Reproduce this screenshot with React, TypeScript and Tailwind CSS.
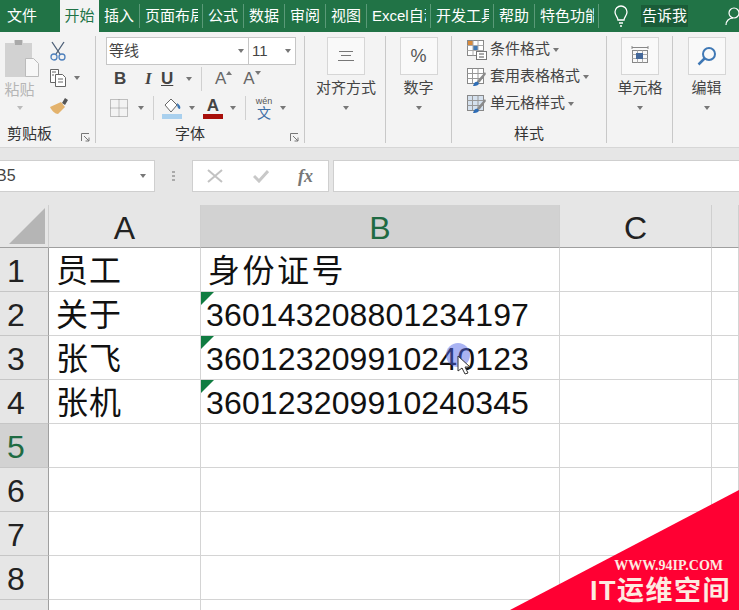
import type { ReactNode } from "react";

const cjk = "font-['Liberation_Sans','Noto_Sans_CJK_SC',sans-serif]";

const tabs = [
  { label: "插入", width: "w-[41px]" },
  { label: "页面布局", width: "w-[63px]" },
  { label: "公式", width: "w-[41px]" },
  { label: "数据", width: "w-[41px]" },
  { label: "审阅", width: "w-[41px]" },
  { label: "视图", width: "w-[41px]" },
  { label: "Excel自动", width: "w-[64px]" },
  { label: "开发工具", width: "w-[63px]" },
  { label: "帮助", width: "w-[41px]" },
  { label: "特色功能", width: "w-[64px]" },
];

function Caret({ className = "" }: { className?: string }) {
  return <span className={`inline-block h-0 w-0 border-x-[3.5px] border-t-[4px] border-x-transparent border-t-[#777] ${className}`} />;
}

function TabBar() {
  return (
    <div className="flex h-[32px] items-center overflow-hidden bg-[#217346] text-[15px] text-white">
      <div className="flex h-full w-[60px] shrink-0 items-center pl-[7px]">文件</div>
      <div className="flex h-full w-[39px] shrink-0 items-center justify-center bg-[#f3f3f3] text-[#217346]">开始</div>
      {tabs.map((t) => (
        <div key={t.label} className={`flex h-[24px] shrink-0 items-center overflow-hidden whitespace-nowrap border-r border-[#5a9a78] pl-[5px] pr-[4px] ${t.width}`}>
          <span className="block w-[100%] overflow-hidden">{t.label}</span>
        </div>
      ))}
      <svg width="18" height="24" viewBox="0 0 18 24" fill="none" stroke="#fff" strokeWidth="1.3" className="ml-[13px] shrink-0">
        <path d="M6 16c0-3-3-4-3-8a6 6 0 0 1 12 0c0 4-3 5-3 8z" />
        <path d="M7 19h4M8 22h2" />
      </svg>
      <div className="ml-[11px] shrink-0 whitespace-nowrap bg-[#1a5c38] px-[1px]">告诉我</div>
      <svg width="16" height="20" viewBox="0 0 16 20" fill="none" stroke="#fff" strokeWidth="1.2" className="ml-[37px] shrink-0">
        <circle cx="9" cy="7" r="5" />
        <path d="M1 19c0-4 3-7 7-7" />
      </svg>
    </div>
  );
}

function Group({ width, label, labelPad = "", launcher, children }: { width: string; label?: string; labelPad?: string; launcher?: boolean; children: ReactNode }) {
  return (
    <div className={`flex h-[107px] shrink-0 flex-col border-r border-[#c8c8c8] ${width}`}>
      <div className="h-[90px]">{children}</div>
      <div className={`relative flex h-[17px] items-center justify-center text-[15px] text-[#333] ${labelPad}`}>
        {label}
        {launcher && (
          <svg width="9" height="9" viewBox="0 0 9 9" fill="none" stroke="#777" className="absolute bottom-[1px] right-[5px]">
            <path d="M0.5 8V0.5H8M3 3l5 5M8 4.5V8H4.5" />
          </svg>
        )}
      </div>
    </div>
  );
}

function BigButton({ label, children }: { label: string; children: ReactNode }) {
  return (
    <div className="flex flex-col items-center text-[15px] text-[#444]">
      <div className="flex h-[38px] w-[38px] items-center justify-center border border-[#d6d6d6] bg-[#f9f9f9]">{children}</div>
      <div className="mt-[2px] whitespace-nowrap leading-[22px]">{label}</div>
      <Caret className="mt-[7px]" />
    </div>
  );
}

function StyleRow({ label, icon }: { label: string; icon: ReactNode }) {
  return (
    <div className="flex h-[27px] items-center whitespace-nowrap text-[15px] text-[#444]">
      {icon}
      <span className="ml-[3px]">{label}</span>
      <Caret className="ml-[3px] border-x-[3px] border-t-[3px]" />
    </div>
  );
}

function GridIcon({ tint }: { tint: string }) {
  return (
    <svg width="20" height="20" viewBox="0 0 20 20" className="shrink-0">
      <rect x="0.5" y="1.5" width="16" height="15" fill={tint} stroke="#888" />
      <path d="M0.5 6.5h16M0.5 11.5h16M5.5 1.5v15M11 1.5v15" stroke="#999" fill="none" />
      <path d="M18 5l-7 8-3 5 5-3 6-8z" fill="#8a8a8a" />
      <path d="M6 19c1-4 3-5 5-4l1 2c-2 2-4 2-6 2z" fill="#2f6db5" />
    </svg>
  );
}

function Ribbon() {
  return (
    <div className="flex h-[116px] border-b border-[#d6d6d6] bg-[#f3f3f3] pt-[4px]">
      <Group width="w-[96px]" label="剪贴板" labelPad="pr-[36px]" launcher>
        <div className="flex pl-[4px] pt-[2px]">
          <div className="flex w-[36px] flex-col items-center text-[15px] text-[#b5b5b5]">
            <svg width="36" height="40" viewBox="0 0 36 40">
              <path d="M1 5h9V2h9v3h9v34H1z" fill="#d2d2d2" />
              <rect x="11" y="2" width="7" height="5" fill="#a9a9a9" />
              <path d="M21.5 20.5h8l5 5v13h-13z" fill="#f7f7f7" stroke="#bbb" />
            </svg>
            <div className="-ml-[5px] mt-[1px] leading-[22px]">粘贴</div>
            <Caret className="-ml-[5px] mt-[5px] border-t-[#bbb]" />
          </div>
          <div className="ml-[9px] flex flex-col pt-[3px]">
            <svg width="18" height="20" viewBox="0 0 18 20" fill="none" stroke="#4a5d75" strokeWidth="1.3">
              <path d="M3 1l8 12M15 1L7 13" />
              <circle cx="5" cy="16" r="3" stroke="#4f81bd" />
              <circle cx="13" cy="16" r="3" stroke="#4f81bd" />
            </svg>
            <div className="mt-[7px] flex items-center">
              <svg width="18" height="20" viewBox="0 0 18 20" fill="#fff" stroke="#666">
                <path d="M1.5 1.5h8v13h-8z" />
                <path d="M6.5 6.5h7l3 3v9h-10z" />
                <path d="M3 4h4M3 7h2M9 11h5M9 14h5" />
              </svg>
              <Caret className="ml-[7px]" />
            </div>
            <svg width="20" height="18" viewBox="0 0 20 18" className="mt-[9px]">
              <path d="M13 6l3-5 3 2-3 5z" fill="#555" />
              <path d="M1 10l11-5 4 5-7 7c-3 0-6-3-8-7z" fill="#e3b26c" />
            </svg>
          </div>
        </div>
      </Group>

      <Group width="w-[209px]" label="字体" labelPad="pr-[20px]" launcher>
        <div className="pl-[10px] pt-[1px]">
          <div className="flex h-[28px] text-[15px] text-[#444]">
            <div className="flex w-[143px] items-center justify-between border border-[#c6c6c6] bg-white pl-[2px] pr-[4px]">
              等线
              <Caret />
            </div>
            <div className="flex w-[47px] items-center justify-between border border-l-0 border-[#c6c6c6] bg-white pl-[3px] pr-[4px]">
              11
              <Caret />
            </div>
          </div>
          <div className="flex h-[28px] items-center text-[17px] text-[#444]">
            <span className="ml-[8px] w-[20px] font-['Liberation_Sans'] font-bold">B</span>
            <span className="ml-[11px] w-[20px] font-['Liberation_Serif'] font-bold italic">I</span>
            <span className="-ml-[4px] w-[14px] font-['Liberation_Sans'] font-bold underline">U</span>
            <Caret className="ml-[11px]" />
            <span className="ml-[9px] h-[24px] border-l border-[#d0d0d0]" />
            <span className="ml-[13px] font-['Liberation_Sans'] text-[#666]">A</span>
            <Caret className="mb-[12px] rotate-180 border-x-[2.5px] border-t-[3px]" />
            <span className="ml-[11px] font-['Liberation_Sans'] text-[#666]">A</span>
            <Caret className="mb-[12px] border-x-[3px] border-t-[3px] border-t-[#4a6d9c]" />
          </div>
          <div className="flex h-[28px] items-center pt-[2px]">
            <svg width="18" height="18" viewBox="0 0 18 18" fill="none" stroke="#888" strokeDasharray="1 1" className="ml-[4px]">
              <rect x="0.5" y="0.5" width="17" height="17" />
              <path d="M0.5 9h17M9 0.5v17" />
            </svg>
            <Caret className="ml-[10px]" />
            <span className="ml-[9px] h-[24px] border-l border-[#d0d0d0]" />
            <div className="ml-[8px] flex w-[20px] flex-col items-center">
              <svg width="20" height="17" viewBox="0 0 20 17">
                <path d="M3 8l6-6 6 6-6 7z" fill="#fff" stroke="#666" />
                <path d="M15 6c3 2 4 4 3 6-2 0-3-2-3-6z" fill="#3f78b5" />
              </svg>
              <div className="h-[5px] w-[20px] bg-[#a9d0ee]" />
            </div>
            <Caret className="ml-[7px]" />
            <div className="ml-[8px] flex w-[20px] flex-col items-center font-['Liberation_Sans'] text-[17px] font-bold leading-[17px] text-[#444]">
              A
              <div className="h-[5px] w-[20px] bg-[#a80f0a]" />
            </div>
            <Caret className="ml-[7px]" />
            <span className="ml-[9px] h-[24px] border-l border-[#d0d0d0]" />
            <div className="ml-[9px] flex w-[18px] flex-col items-center text-[11px] leading-[10px] text-[#555]">
              <span className="font-['Liberation_Sans'] text-[9px]">wén</span>
              <span className="text-[14px] leading-[14px] text-[#3b6ea5]">文</span>
            </div>
            <Caret className="ml-[7px]" />
          </div>
        </div>
      </Group>

      <Group width="w-[81px]">
        <div className="pl-[2px] pt-[1px]">
          <BigButton label="对齐方式">
            <svg width="18" height="12" viewBox="0 0 18 12" stroke="#777" fill="none">
              <path d="M2 1.5h14M4 5.5h10M1 10.5h16" />
            </svg>
          </BigButton>
        </div>
      </Group>

      <Group width="w-[66px]">
        <div className="pt-[1px]">
          <BigButton label="数字">
            <span className="font-['Liberation_Sans'] text-[18px] text-[#555]">%</span>
          </BigButton>
        </div>
      </Group>

      <Group width="w-[155px]" label="样式">
        <div className="pl-[15px]">
          <StyleRow
            label="条件格式"
            icon={
              <svg width="20" height="20" viewBox="0 0 20 20" className="shrink-0">
                <rect x="0.5" y="0.5" width="16" height="15" fill="#fff" stroke="#888" />
                <rect x="1" y="1" width="5" height="4" fill="#d98a3a" />
                <rect x="6" y="5" width="5" height="5" fill="#3f78b5" />
                <path d="M0.5 5.5h16M0.5 10.5h16M6 0.5v15M11 0.5v15" stroke="#aaa" />
                <rect x="9.5" y="11.5" width="10" height="8" fill="#fff" stroke="#777" />
                <path d="M12 14h5M12 17h5" stroke="#555" />
              </svg>
            }
          />
          <StyleRow label="套用表格格式" icon={<GridIcon tint="#fff" />} />
          <StyleRow label="单元格样式" icon={<GridIcon tint="#d5e1ee" />} />
        </div>
      </Group>

      <Group width="w-[66px]">
        <div className="pl-[1px] pt-[1px]">
          <BigButton label="单元格">
            <svg width="20" height="20" viewBox="0 0 20 20" fill="none" stroke="#888">
              <path d="M2 1.5h16M2 0v3M18 0v3" />
              <rect x="2.5" y="4.5" width="15" height="12" />
              <path d="M2.5 8.5h15M2.5 12.5h15M7.5 4.5v12M12.5 4.5v12" stroke="#aaa" />
              <rect x="6" y="7" width="7" height="6" fill="#44689a" stroke="none" />
            </svg>
          </BigButton>
        </div>
      </Group>

      <div className="w-[66px] pl-[1px] pt-[1px]">
        <BigButton label="编辑">
          <svg width="20" height="20" viewBox="0 0 20 20" fill="none" stroke="#3f78b5" strokeWidth="2">
            <circle cx="12" cy="8" r="6" />
            <path d="M7.5 12.5L1.5 18.5" strokeWidth="2.5" />
          </svg>
        </BigButton>
      </div>
    </div>
  );
}

function FormulaBar() {
  return (
    <div className="flex h-[57px] bg-[#e6e6e6] pt-[12px]">
      <div className="flex h-[32px] w-[155px] items-center justify-between overflow-hidden border border-l-0 border-[#cfcfcf] bg-white pr-[8px]">
        <span className="-ml-[4px] font-['Liberation_Sans'] text-[16px] text-[#444]">B5</span>
        <Caret />
      </div>
      <div className="ml-[16px] flex h-[32px] w-[4px] flex-col items-center justify-center gap-[2px]">
        <span className="h-[2px] w-[3px] bg-[#aaa]" />
        <span className="h-[2px] w-[3px] bg-[#aaa]" />
        <span className="h-[2px] w-[3px] bg-[#aaa]" />
      </div>
      <div className="ml-[17px] flex h-[32px] w-[137px] items-center border border-[#cfcfcf] bg-white">
        <svg width="16" height="14" viewBox="0 0 16 14" stroke="#c2c2c2" strokeWidth="2" fill="none" className="ml-[14px]">
          <path d="M1 1l14 12M15 1L1 13" />
        </svg>
        <svg width="16" height="14" viewBox="0 0 16 14" stroke="#c8c8c8" strokeWidth="3" fill="none" className="ml-[30px]">
          <path d="M1 7l5 5 9-10" />
        </svg>
        <span className="ml-[29px] font-['Liberation_Serif'] text-[18px] font-bold italic text-[#777]">fx</span>
      </div>
      <div className="ml-[4px] h-[32px] flex-1 border border-r-0 border-[#cfcfcf] bg-white" />
    </div>
  );
}

const rows = [
  { a: "员工", b: "身份证号" },
  { a: "关于", b: "360143208801234197", flag: true },
  { a: "张飞", b: "360123209910240123", flag: true },
  { a: "张机", b: "360123209910240345", flag: true },
  { a: "", b: "" },
  { a: "", b: "" },
  { a: "", b: "" },
  { a: "", b: "" },
];

function Sheet() {
  const cell = "border-r border-b border-[#d4d4d4] h-[44px] flex items-center overflow-hidden whitespace-nowrap pt-[2px] text-[32px] leading-none text-[#111]";
  const head = "h-[43px] border-r border-b border-r-[#cfcfcf] border-b-[#9f9f9f] flex items-center justify-center pt-[3px] text-[32px] leading-none";
  return (
    <div className={`grid grid-cols-[49px_152px_359px_152px_27px] ${cjk}`}>
      <div className="flex h-[43px] items-end justify-end border-r border-b border-r-[#cfcfcf] border-b-[#9f9f9f] bg-[#e6e6e6] p-[3px]">
        <div className="h-0 w-0 border-b-[36px] border-l-[36px] border-b-[#b5b5b5] border-l-transparent" />
      </div>
      <div className={`${head} bg-[#e6e6e6] text-[#222]`}>A</div>
      <div className={`${head} bg-[#d2d2d2] text-[#1f6b43]`}>B</div>
      <div className={`${head} bg-[#e6e6e6] text-[#222]`}>C</div>
      <div className={`${head} bg-[#e6e6e6]`} />
      {rows.map((r, i) => (
        <div key={i} className="contents">
          <div className={`flex h-[44px] items-center justify-start border-r border-b border-r-[#9f9f9f] border-b-[#c6c6c6] pl-[7px] pt-[2px] text-[32px] leading-none ${i === 4 ? "bg-[#d2d2d2] text-[#1f6b43]" : "bg-[#e6e6e6] text-[#222]"}`}>
            {i + 1}
          </div>
          <div className={`${cell} pl-[7px] tracking-[1px]`}>{r.a}</div>
          <div className={`${cell} relative ${r.flag ? "pl-[5px] tracking-[0.15px]" : "pl-[7px] tracking-[2.5px]"}`}>
            {r.flag && <span className="absolute left-0 top-0 h-0 w-0 border-r-[13px] border-t-[13px] border-r-transparent border-t-[#107c41]" />}
            {r.b}
          </div>
          <div className={cell} />
          <div className={cell} />
        </div>
      ))}
      <div className="h-[12px] border-r border-[#9f9f9f] bg-[#e6e6e6]" />
      <div className="border-r border-[#d4d4d4]" />
      <div className="border-r border-[#d4d4d4]" />
      <div className="border-r border-[#d4d4d4]" />
      <div />
    </div>
  );
}

export default function App() {
  return (
    <div className={`relative h-[610px] w-[739px] overflow-hidden bg-white ${cjk}`}>
      <TabBar />
      <Ribbon />
      <FormulaBar />
      <Sheet />

      {/* mouse highlight */}
      <div className="absolute left-[446px] top-[343px] h-[24px] w-[24px] rounded-full bg-[#5468e8] opacity-50" />
      <svg width="14" height="20" viewBox="0 0 14 20" className="absolute left-[457px] top-[355px]">
        <path d="M1 1v15l4-3 3 6 3-1-3-6h5z" fill="#fff" stroke="#333" />
      </svg>

      {/* watermark */}
      <div className="absolute bottom-0 right-0 h-[120px] w-[229px] bg-[#ff0033] [clip-path:polygon(100%_0,100%_100%,0_100%)]" />
      <div className="absolute right-[16px] top-[558px] font-['Liberation_Serif'] text-[14px] font-bold leading-[16px] text-[#fdeae0]">WWW.94IP.COM</div>
      <div className="absolute right-[8px] top-[575px] whitespace-nowrap text-[27px] font-bold leading-[32px] tracking-[1.5px] text-[#fdeae0]">IT运维空间</div>
    </div>
  );
}
